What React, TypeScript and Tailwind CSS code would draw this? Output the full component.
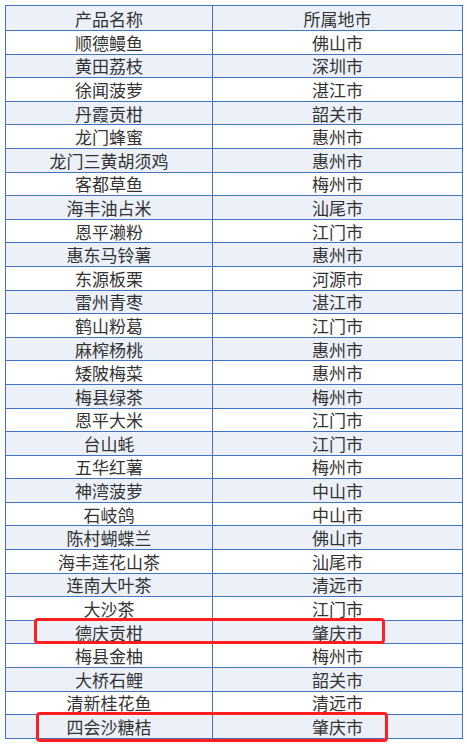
import React from 'react';

const rows: [string, string][] = [
  ['顺德鳗鱼', '佛山市'],
  ['黄田荔枝', '深圳市'],
  ['徐闻菠萝', '湛江市'],
  ['丹霞贡柑', '韶关市'],
  ['龙门蜂蜜', '惠州市'],
  ['龙门三黄胡须鸡', '惠州市'],
  ['客都草鱼', '梅州市'],
  ['海丰油占米', '汕尾市'],
  ['恩平濑粉', '江门市'],
  ['惠东马铃薯', '惠州市'],
  ['东源板栗', '河源市'],
  ['雷州青枣', '湛江市'],
  ['鹤山粉葛', '江门市'],
  ['麻榨杨桃', '惠州市'],
  ['矮陂梅菜', '惠州市'],
  ['梅县绿茶', '梅州市'],
  ['恩平大米', '江门市'],
  ['台山蚝', '江门市'],
  ['五华红薯', '梅州市'],
  ['神湾菠萝', '中山市'],
  ['石岐鸽', '中山市'],
  ['陈村蝴蝶兰', '佛山市'],
  ['海丰莲花山茶', '汕尾市'],
  ['连南大叶茶', '清远市'],
  ['大沙茶', '江门市'],
  ['德庆贡柑', '肇庆市'],
  ['梅县金柚', '梅州市'],
  ['大桥石鲤', '韶关市'],
  ['清新桂花鱼', '清远市'],
  ['四会沙糖桔', '肇庆市'],
];

export default function App() {
  return (
    <div className="relative w-[467px] h-[744px] bg-white pt-[5px] pl-[5px] font-['Noto_Sans_CJK_SC',sans-serif] text-[#333]">
      <table className="w-[458px] border-collapse table-fixed text-[17px] leading-none">
        <colgroup>
          <col className="w-[207px]" />
          <col />
        </colgroup>
        <tbody>
          <tr className="h-[25px] bg-[#ebf0f9]">
            <td className="border border-[#4472c4] text-center p-0">产品名称</td>
            <td className="border border-[#4472c4] text-center p-0">所属地市</td>
          </tr>
          {rows.map(([name, city], i) => (
            <tr key={name} className={`h-[23.6px] ${i % 2 === 1 ? 'bg-[#ebf0f9]' : 'bg-white'}`}>
              <td className="border border-[#4472c4] text-center p-0">{name}</td>
              <td className="border border-[#4472c4] text-center p-0">{city}</td>
            </tr>
          ))}
        </tbody>
      </table>

      {/* highlight boxes */}
      <div className="absolute left-[34px] top-[618px] w-[351px] h-[26px] border-[3px] border-[#ff1f1f] rounded-[4px]" />
      <div className="absolute left-[36px] top-[712px] w-[352px] h-[30px] border-[3px] border-[#ff1f1f] rounded-[4px]" />
    </div>
  );
}
